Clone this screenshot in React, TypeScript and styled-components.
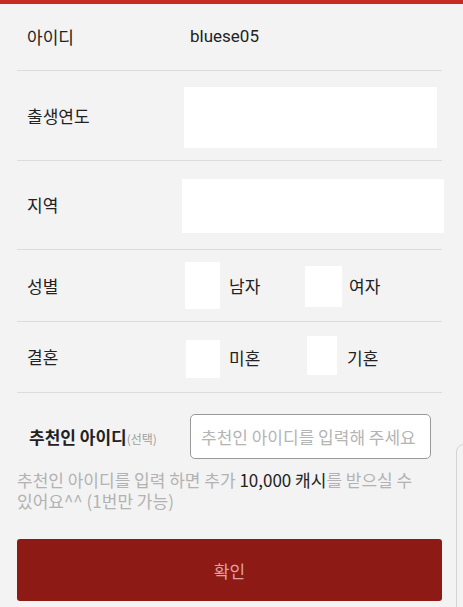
import React from "react";
import styled, { createGlobalStyle } from "styled-components";

const GlobalStyle = createGlobalStyle`
  html, body {
    margin: 0;
    padding: 0;
    background: #f3f3f3;
    overflow: hidden;
  }
  body {
    font-family: "Noto Sans CJK KR", "Noto Sans", sans-serif;
    color: #222;
  }
`;

const Page = styled.div`
  position: relative;
  width: 463px;
  height: 607px;
  background: #f3f3f3;
  border-top: 4px solid #c62a22;
  box-sizing: border-box;
  overflow: hidden;
`;

const Form = styled.div`
  padding: 0 21px 0 17px;
  display: flex;
  flex-direction: column;
`;

const Row = styled.div<{ $h: number }>`
  height: ${(p) => p.$h}px;
  display: flex;
  align-items: center;
  padding-left: 10px;
  border-bottom: 1px solid #dcdcdc;
`;

const Label = styled.div`
  width: 157px;
  flex-shrink: 0;
  font-size: 17px;
  line-height: 20px;
  color: #222;
`;

const Value = styled.div`
  font-family: Roboto, "Noto Sans CJK KR", sans-serif;
  font-size: 17px;
  padding-left: 6px;
  margin-top: -2px;
`;

const Field = styled.div<{ $w: number; $h: number; $dx: number; $dy: number }>`
  width: ${(p) => p.$w}px;
  height: ${(p) => p.$h}px;
  margin-left: ${(p) => p.$dx}px;
  margin-top: ${(p) => p.$dy}px;
  background: #fff;
  flex-shrink: 0;
`;

const Options = styled.div`
  display: flex;
  align-items: center;
`;

const Option = styled.div<{ $w: number }>`
  width: ${(p) => p.$w}px;
  display: flex;
  align-items: center;
`;

const Check = styled.div<{ $w: number; $h: number; $dx: number; $dy: number }>`
  width: ${(p) => p.$w}px;
  height: ${(p) => p.$h}px;
  margin-left: ${(p) => p.$dx}px;
  margin-top: ${(p) => p.$dy}px;
  background: #fff;
  flex-shrink: 0;
`;

const OptionText = styled.span<{ $gap: number }>`
  margin-left: ${(p) => p.$gap}px;
  font-size: 17px;
  color: #222;
`;

const RefRow = styled.div`
  display: flex;
  align-items: center;
  padding: 21px 0 0 12px;
`;

const RefLabel = styled.div`
  width: 161px;
  flex-shrink: 0;
  font-size: 17px;
  font-weight: 700;
  color: #222;
  white-space: nowrap;
`;

const Small = styled.span`
  font-size: 12px;
  font-weight: 400;
  color: #a0a0a0;
`;

const RefInput = styled.input`
  width: 241px;
  height: 45px;
  box-sizing: border-box;
  border: 1px solid #9a9a9a;
  border-radius: 5px;
  background: #fff;
  padding: 0 0 0 10px;
  font-family: "Noto Sans CJK KR", sans-serif;
  font-size: 17px;
  outline: none;
  &::placeholder {
    color: #b4b4b4;
  }
`;

const Help = styled.p`
  margin: 10px 0 0;
  width: 425px;
  font-size: 17px;
  line-height: 21px;
  color: #b2b2b2;
  word-break: keep-all;
`;

const Strong = styled.span`
  color: #222;
`;

const Submit = styled.button`
  margin-top: 28px;
  height: 62px;
  width: 425px;
  border: none;
  border-radius: 3px;
  background: #8e1a16;
  color: #dba3a3;
  font-family: "Noto Sans CJK KR", sans-serif;
  font-size: 17px;
`;

const EdgeCard = styled.div`
  position: absolute;
  left: 456px;
  top: 440px;
  width: 40px;
  height: 200px;
  border: 1px solid #d4d4d4;
  border-radius: 8px;
  background: #f3f3f3;
`;

export default function App() {
  return (
    <Page>
      <GlobalStyle />
      <Form>
        <Row $h={66}>
          <Label>아이디</Label>
          <Value>bluese05</Value>
        </Row>
        <Row $h={89}>
          <Label>출생연도</Label>
          <Field $w={253} $h={61} $dx={0} $dy={4} />
        </Row>
        <Row $h={88}>
          <Label>지역</Label>
          <Field $w={262} $h={54} $dx={-2} $dy={2} />
        </Row>
        <Row $h={71}>
          <Label>성별</Label>
          <Options>
            <Option $w={121}>
              <Check $w={35} $h={47} $dx={1} $dy={0} />
              <OptionText $gap={9}>남자</OptionText>
            </Option>
            <Option $w={100}>
              <Check $w={37} $h={41} $dx={0} $dy={2} />
              <OptionText $gap={7}>여자</OptionText>
            </Option>
          </Options>
        </Row>
        <Row $h={70}>
          <Label>결혼</Label>
          <Options>
            <Option $w={123}>
              <Check $w={34} $h={38} $dx={2} $dy={4} />
              <OptionText $gap={9}>미혼</OptionText>
            </Option>
            <Option $w={100}>
              <Check $w={30} $h={39} $dx={0} $dy={-4} />
              <OptionText $gap={10}>기혼</OptionText>
            </Option>
          </Options>
        </Row>
        <RefRow>
          <RefLabel>
            추천인 아이디<Small>(선택)</Small>
          </RefLabel>
          <RefInput placeholder="추천인 아이디를 입력해 주세요" />
        </RefRow>
        <Help>
          추천인 아이디를 입력 하면 추가 <Strong>10,000 캐시</Strong>를 받으실 수
          있어요^^ (1번만 가능)
        </Help>
        <Submit>확인</Submit>
      </Form>
      <EdgeCard />
    </Page>
  );
}
